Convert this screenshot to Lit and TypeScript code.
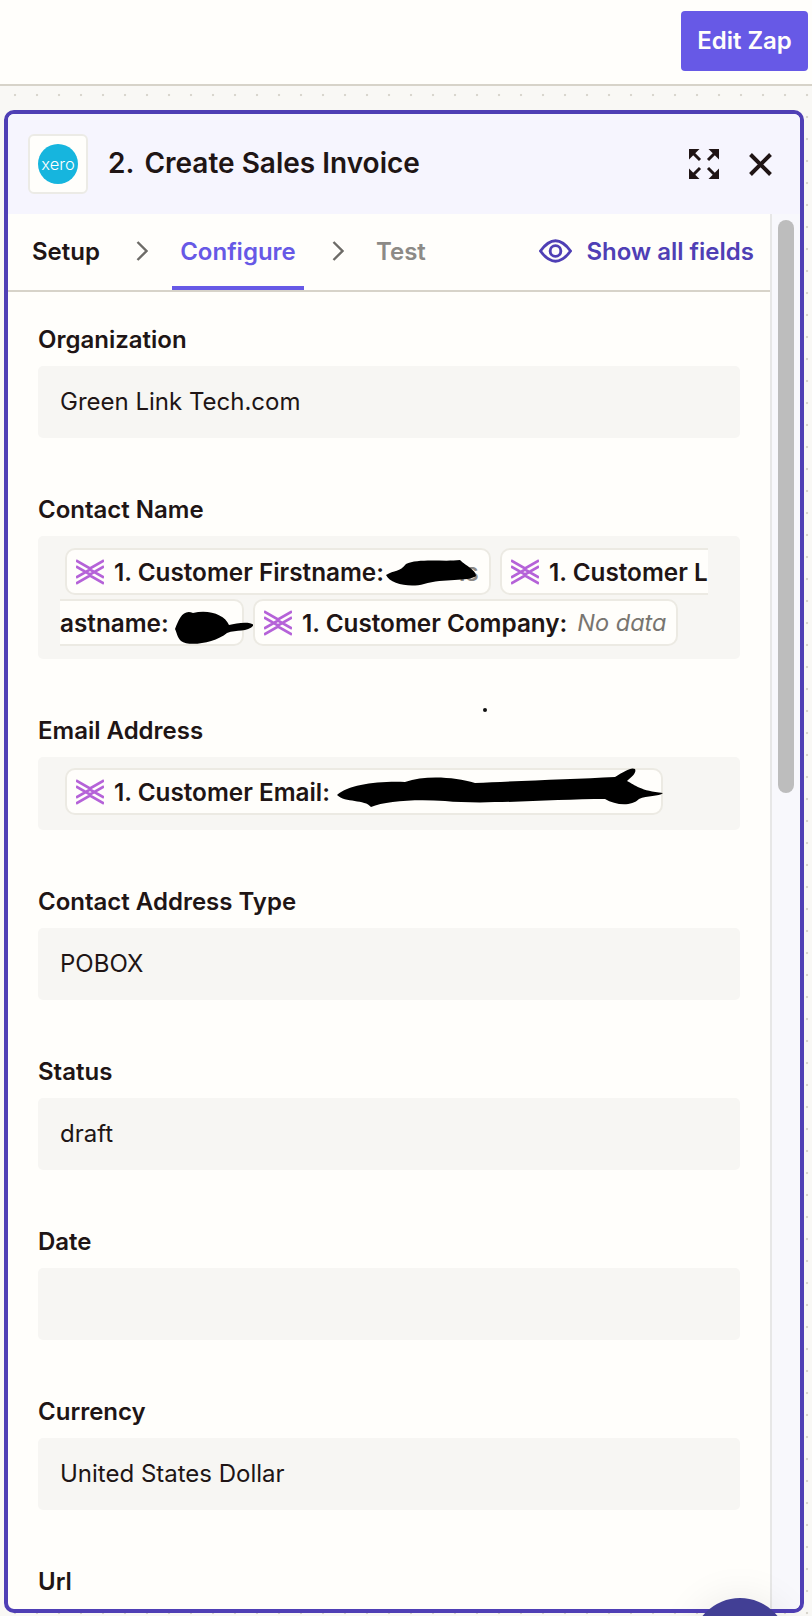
import { LitElement, html, css, svg } from 'lit'
import { customElement } from 'lit/decorators.js'

const pathIcon = html`<svg class="step-icon" viewBox="0 0 28 26" width="28" height="26" fill="none" stroke="#b562d8" stroke-width="2.700">
  <path d="M0 1.500l14 8 14-8M0 7.500l14 8 14-8M0 24.500l14-8 14 8M0 18.500l14-8 14 8"/>
</svg>`

const scribble = (w: number, h: number, d: unknown) =>
  html`<svg class="scribble" width=${w} height=${h} viewBox="0 0 ${w} ${h}">${d}</svg>`

const corner = svg`<path d="M0 0h10.500L0 10.500z"/><path d="M3.500 3.500l7.500 7.500" stroke="#201515" stroke-width="3"/>`

@customElement('app-root')
export class AppRoot extends LitElement {
  static styles = css`
    :host {
      display: flex;
      flex-direction: column;
      position: relative;
      width: 812px;
      height: 1616px;
      overflow: hidden;
      background: #fffefb;
      color: #201515;
      font-family: Inter, 'Liberation Sans', sans-serif;
    }
    .topbar {
      display: flex;
      justify-content: flex-end;
      flex: none;
      height: 73px;
      padding: 11px 4px 0 0;
      border-bottom: 2px solid #d7d3c9;
    }
    .edit {
      display: flex;
      align-items: center;
      justify-content: center;
      width: 127px;
      height: 60px;
      box-sizing: border-box;
      padding-bottom: 2px;
      border-radius: 4px;
      background: #6759e6;
      color: #fffefb;
      font-size: 24px;
      font-weight: 600;
    }
    .canvas {
      flex: 1;
      min-height: 0;
      display: flex;
      padding: 24px 8px 3px 4px;
      background-color: #f9f8f5;
      background-image: radial-gradient(circle at 15px 9px, #d9d6ce 1px, transparent 1.6px);
      background-size: 22px 22px;
    }
    .panel {
      flex: 1;
      min-width: 0;
      display: flex;
      flex-direction: column;
      border: 4px solid #4f3fb5;
      border-radius: 10px;
      overflow: hidden;
      background: #fffefb;
    }
    .head {
      flex: none;
      height: 100px;
      display: flex;
      align-items: center;
      padding: 0 28px 0 20px;
      background: #f6f5fe;
    }
    .logo {
      flex: none;
      width: 60px;
      height: 60px;
      box-sizing: border-box;
      border: 2px solid #ecebe6;
      border-radius: 6px;
      background: #fffefb;
      display: flex;
      align-items: center;
      justify-content: center;
      margin-right: 20px;
    }
    .title {
      flex: 1;
      font-size: 28px;
      font-weight: 600;
      display: flex;
      gap: 10px;
      margin-top: -2px;
    }
    .head-actions {
      display: flex;
      align-items: center;
      gap: 30px;
    }
    .body {
      flex: 1;
      min-height: 0;
      display: flex;
    }
    .main {
      flex: 1;
      min-width: 0;
    }
    .rail {
      flex: none;
      width: 30px;
      box-sizing: border-box;
      border-left: 2px solid #e7e7e7;
      background: #f8f8fc;
      padding: 6px 6px 0;
    }
    .thumb {
      height: 573px;
      border-radius: 8px;
      background: #bdbdbd;
    }
    .tabs {
      height: 74px;
      display: flex;
      align-items: center;
      padding: 0 16px 2px 24px;
      border-bottom: 2px solid #d7d3c9;
      font-size: 24px;
      font-weight: 600;
    }
    .tab-setup {
      width: 104px;
    }
    .chev {
      flex: none;
      width: 12px;
      height: 20px;
    }
    .tab-conf {
      color: #6759e6;
      width: 132px;
      margin: 0 28px 0 24px;
      align-self: flex-start;
      display: flex;
      align-items: center;
      justify-content: center;
      box-sizing: border-box;
      height: 76px;
      border-bottom: 4px solid #6759e6;
      padding-top: 2px;
    }
    .tab-test {
      color: #8c8a86;
      margin-left: 32px;
    }
    .show {
      margin-left: auto;
      display: flex;
      align-items: center;
      gap: 14px;
      color: #4f3fb5;
    }
    .fields {
      display: flex;
      flex-direction: column;
      gap: 57px;
      padding: 33px 30px 0;
    }
    .field {
      display: flex;
      flex-direction: column;
      gap: 12px;
    }
    .label {
      font-size: 24px;
      font-weight: 600;
      line-height: 28px;
      padding-top: 1px;
    }
    .box {
      min-height: 72px;
      box-sizing: border-box;
      border-radius: 5px;
      background: #f7f6f3;
      display: flex;
      align-items: center;
      padding: 0 22px 2px;
      font-size: 24px;
    }
    .box.tokens {
      padding: 12px 32px 12px 22px;
      min-height: 123px;
      align-items: flex-start;
    }
    .box.tokens.single {
      padding: 11px 32px 0 27px;
      min-height: 73px;
    }
    .wrap {
      display: flex;
      flex-wrap: wrap;
      gap: 4px 9px;
      flex: 1;
      min-width: 0;
      overflow: hidden;
    }
    .single .wrap {
      overflow: visible;
    }
    .chip {
      display: flex;
      align-items: center;
      gap: 10px;
      height: 47px;
      box-sizing: border-box;
      padding: 0 9px;
      border: 2px solid #eceae3;
      border-radius: 10px;
      background: #fffefb;
      font-size: 24.300px;
      font-weight: 600;
      white-space: nowrap;
      position: relative;
    }
    .step-icon {
      flex: none;
    }
    .chip.first {
      margin-left: 5px;
      width: 426px;
    }
    .chip.cut-right {
      flex: 1;
      min-width: 0;
      border-right: none;
      border-radius: 10px 0 0 10px;
      overflow: hidden;
    }
    .chip.cut-left {
      width: 184px;
      padding-left: 0;
      border-left: none;
      border-radius: 0 10px 10px 0;
    }
    .chip.email {
      width: 598px;
    }
    .nodata {
      color: #787570;
      font-size: 23.500px;
      font-style: italic;
      font-weight: 400;
    }
    .scribble {
      position: absolute;
      pointer-events: none;
    }
    .chip.first .scribble {
      left: 317px;
      top: 2px;
    }
    .chip.cut-left .scribble {
      left: 115px;
      top: 4px;
    }
    .chip.email .scribble {
      left: 268px;
      top: -3px;
      overflow: visible;
    }
    .faint {
      position: absolute;
      left: 392px;
      color: #8c8a86;
    }
    .speck {
      position: absolute;
      left: 483px;
      top: 708px;
      width: 4px;
      height: 4px;
      border-radius: 50%;
      background: #111;
    }
    .fab {
      position: absolute;
      left: 692px;
      top: 1598px;
      width: 96px;
      height: 96px;
      border-radius: 50%;
      background: #423f95;
      box-shadow: 0 0 40px rgba(0, 0, 0, 0.08);
    }
  `

  private field (label: string, value = '') {
    return html`
      <div class="field">
        <div class="label">${label}</div>
        <div class="box">${value}</div>
      </div>
    `
  }

  render () {
    return html`
      <div class="topbar"><div class="edit">Edit Zap</div></div>
      <div class="canvas">
        <div class="panel">
          <div class="head">
            <div class="logo">
              <svg width="40" height="40" viewBox="0 0 40 40">
                <circle cx="20" cy="20" r="20" fill="#16b5de"/>
                <text x="20" y="25.500" text-anchor="middle" fill="#fff" font-family="Inter, sans-serif" font-size="16.500" font-weight="300">xero</text>
              </svg>
            </div>
            <div class="title"><span>2.</span><span>Create Sales Invoice</span></div>
            <div class="head-actions">
              <svg width="30" height="30" viewBox="0 0 30 30" fill="#201515">
                <g>${corner}</g>
                <g transform="translate(30 0) rotate(90)">${corner}</g>
                <g transform="translate(30 30) rotate(180)">${corner}</g>
                <g transform="translate(0 30) rotate(270)">${corner}</g>
              </svg>
              <svg width="23" height="23" viewBox="0 0 23 23" stroke="#201515" stroke-width="4" fill="none">
                <path d="M1.500 1.500l20 20M21.500 1.500l-20 20"/>
              </svg>
            </div>
          </div>
          <div class="body">
            <div class="main">
              <div class="tabs">
                <span class="tab-setup">Setup</span>
                <svg class="chev" viewBox="0 0 12 20" fill="none" stroke="#6d6b67" stroke-width="2.400"><path d="M1.500 1l9 9-9 9"/></svg>
                <span class="tab-conf">Configure</span>
                <svg class="chev" viewBox="0 0 12 20" fill="none" stroke="#6d6b67" stroke-width="2.400"><path d="M1.500 1l9 9-9 9"/></svg>
                <span class="tab-test">Test</span>
                <span class="show">
                  <svg width="33" height="24" viewBox="0 0 34 24" fill="none" stroke="#4f3fb5" stroke-width="3">
                    <path d="M1.500 12C7 4.500 12 1.500 17 1.500S27 4.500 32.500 12C27 19.500 22 22.500 17 22.500S7 19.500 1.500 12z"/>
                    <circle cx="17" cy="12" r="5.500"/>
                  </svg>
                  Show all fields
                </span>
              </div>
              <div class="fields">
                ${this.field('Organization', 'Green Link Tech.com')}
                <div class="field">
                  <div class="label">Contact Name</div>
                  <div class="box tokens">
                    <div class="wrap">
                      <div class="chip first">${pathIcon}1. Customer Firstname:
                        <span class="faint">ls</span>
                        ${scribble(94, 40, svg`<path fill="#000" d="M2 23C10 18 16 20 22 12C34 6 60 10 76 8C82 14 92 18 92 24C84 30 60 26 40 32C26 36 6 32 2 23z"/>`)}
                      </div>
                      <div class="chip cut-right">${pathIcon}1. Customer L</div>
                      <div class="chip cut-left">astname:
                        ${scribble(80, 40, svg`<path fill="#000" d="M0 24C4 14 8 4 18 8C34 4 50 10 54 20C62 18 74 16 79 20C72 28 62 24 52 28C40 38 14 42 6 36C2 32 2 28 0 24z"/>`)}
                      </div>
                      <div class="chip">${pathIcon}1. Customer Company: <span class="nodata">No data</span></div>
                    </div>
                  </div>
                </div>
                <div class="field">
                  <div class="label">Email Address</div>
                  <div class="box tokens single">
                    <div class="wrap">
                      <div class="chip email">${pathIcon}1. Customer Email:
                        ${scribble(330, 44, svg`<path fill="#000" d="M2 28C14 18 40 14 70 15C90 8 120 10 140 16C180 14 240 12 280 10C290 4 296 0 300 2C302 6 296 10 292 14C300 18 306 24 328 26C324 30 312 28 304 32C296 40 280 38 270 32C220 32 150 38 110 34C80 32 50 34 36 40C30 32 10 36 2 28z"/>`)}
                      </div>
                    </div>
                  </div>
                </div>
                ${this.field('Contact Address Type', 'POBOX')}
                ${this.field('Status', 'draft')}
                ${this.field('Date')}
                ${this.field('Currency', 'United States Dollar')}
                <div class="field"><div class="label">Url</div></div>
              </div>
            </div>
            <div class="rail"><div class="thumb"></div></div>
          </div>
        </div>
      </div>
      <div class="speck"></div>
      <div class="fab"></div>
    `
  }
}
